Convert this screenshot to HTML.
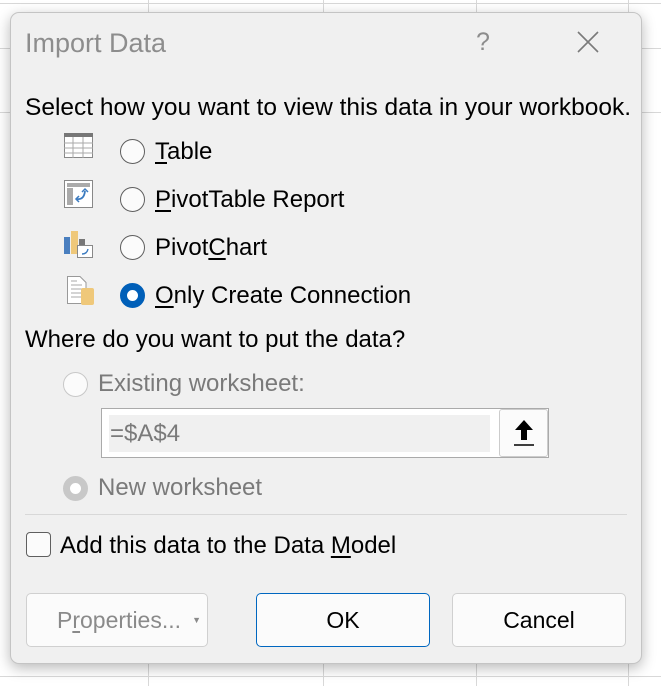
<!DOCTYPE html>
<html><head><meta charset="utf-8"><style>
*{margin:0;padding:0;box-sizing:border-box}
body{width:661px;height:686px;position:relative;overflow:hidden;background:#fff;font-family:"Liberation Sans",sans-serif;color:#000}
.vl{position:absolute;top:0;width:1px;height:686px;background:#d8d8d8}
.hl{position:absolute;left:0;height:1px;width:661px;background:#d8d8d8}
.dlg{position:absolute;left:10px;top:12px;width:632px;height:652px;background:#f0f0f0;border:1px solid #c4c4c4;border-radius:9px;box-shadow:0 4px 14px rgba(0,0,0,.28)}
.t{position:absolute;white-space:nowrap;font-size:24px;line-height:26px}
.r{position:absolute;width:25px;height:25px;border-radius:50%;border:1.5px solid #5f5f5f;background:#fbfbfb}
.btn{position:absolute;top:593px;height:54px;background:#fbfbfb;border:1px solid #d0d0d0;border-radius:5px;font-size:23px;text-align:center;line-height:52px}
u{text-decoration:underline;text-underline-offset:3px}
</style></head><body>
<div class="vl" style="left:148px"></div><div class="vl" style="left:323px"></div><div class="vl" style="left:476px"></div><div class="vl" style="left:628px"></div>
<div class="hl" style="top:3px"></div><div class="hl" style="top:48px"></div><div class="hl" style="top:112px"></div><div class="hl" style="top:676px"></div>
<div class="dlg"></div>
<div class="t" style="left:25px;top:30px;font-size:27px;color:#8d8d8d">Import Data</div>
<div class="t" style="left:476px;top:29px;font-size:25px;color:#8d8d8d">?</div>
<svg style="position:absolute;left:577px;top:31px" width="22" height="22"><path d="M1 1L21 21M21 1L1 21" stroke="#7a7a7a" stroke-width="1.6"/></svg>
<div class="t" style="left:25px;top:95px;font-size:24.5px">Select how you want to view this data in your workbook.</div>

<svg style="position:absolute;left:64px;top:133px" width="30" height="26"><rect x="0.5" y="0.5" width="28" height="24" fill="#fff" stroke="#888"/><rect x="0" y="0" width="29" height="4" fill="#777"/><path d="M0 10H29M0 15H29M0 20H29M9 4V25M19 4V25" stroke="#aaa"/></svg>
<svg style="position:absolute;left:64px;top:180px" width="30" height="28"><rect x="0.5" y="0.5" width="28" height="27" fill="#fff" stroke="#888"/><rect x="3" y="3" width="23" height="4" fill="#aaa"/><rect x="3" y="8" width="6" height="17" fill="#aaa"/><path d="M13 19Q20 20 21 11" stroke="#3b7bc0" stroke-width="1.8" fill="none"/><path d="M18 12L21 9L24 12M15 16L12 19L15 22" stroke="#3b7bc0" stroke-width="1.5" fill="none"/></svg>
<svg style="position:absolute;left:64px;top:228px" width="32" height="32"><rect x="0" y="9" width="6" height="17" fill="#4a7fbf"/><rect x="7" y="3" width="7" height="23" fill="#efc87a"/><rect x="15" y="11" width="6" height="8" fill="#777"/><rect x="13.5" y="17.5" width="15" height="12" fill="#fff" stroke="#888"/><path d="M18 26Q23 26 24 21" stroke="#3b7bc0" stroke-width="1.4" fill="none"/></svg>
<svg style="position:absolute;left:67px;top:276px" width="30" height="32"><path d="M0.5 0.5H13L19 6.5V27.5H0.5Z" fill="#fff" stroke="#999"/><path d="M4 9H15M4 13H15M4 17H15M4 21H15M4 5H10" stroke="#aaa"/><rect x="14" y="12" width="13" height="17" rx="2" fill="#efc87a"/></svg>

<div class="r" style="left:120px;top:139px"></div><div class="t" style="left:155px;top:139px"><u>T</u>able</div>
<div class="r" style="left:120px;top:187px"></div><div class="t" style="left:155px;top:187px"><u>P</u>ivotTable Report</div>
<div class="r" style="left:120px;top:235px"></div><div class="t" style="left:155px;top:235px">Pivot<u>C</u>hart</div>
<div class="r" style="left:120px;top:283px;border:7.5px solid #005fb8;background:#fff"></div><div class="t" style="left:155px;top:283px"><u>O</u>nly Create Connection</div>

<div class="t" style="left:25px;top:327px">Where do you want to put the data?</div>
<div class="r" style="left:63px;top:372px;border-color:#c8c8c8"></div><div class="t" style="left:98px;top:371px;color:#7a7a7a">Existing worksheet:</div>
<div style="position:absolute;left:101px;top:408px;width:448px;height:50px;background:#fff;border:1px solid #aaa"></div>
<div style="position:absolute;left:109px;top:415px;width:381px;height:37px;background:#f0f0f0"></div>
<div class="t" style="left:110px;top:421px;color:#7a7a7a">=$A$4</div>
<div style="position:absolute;left:499px;top:409px;width:49px;height:48px;background:#fbfbfb;border:1px solid #ccc;border-radius:3px"></div>
<svg style="position:absolute;left:512px;top:418px" width="24" height="30"><path d="M12 2L3 12H9V22H15V12H21Z" fill="#000"/><path d="M2 27H22" stroke="#000" stroke-width="1.5"/></svg>
<div class="r" style="left:63px;top:476px;border:7.5px solid #c8c8c8;background:#fff"></div><div class="t" style="left:98px;top:475px;color:#7a7a7a">New worksheet</div>
<div style="position:absolute;left:25px;top:514px;width:602px;height:1px;background:#d8d8d8"></div>
<div style="position:absolute;left:26px;top:532px;width:25px;height:25px;border:1.5px solid #5f5f5f;border-radius:4px;background:#fbfbfb"></div>
<div class="t" style="left:60px;top:533px">Add this data to the Data <u>M</u>odel</div>

<div class="btn" style="left:26px;width:182px;color:#8a8a8a;text-align:left;padding-left:30px">P<u>r</u>operties...<span style="position:absolute;right:6px;top:0;font-size:9px">▼</span></div>
<div class="btn" style="left:256px;width:174px;border-color:#0067c0">OK</div>
<div class="btn" style="left:452px;width:174px">Cancel</div>
</body></html>
